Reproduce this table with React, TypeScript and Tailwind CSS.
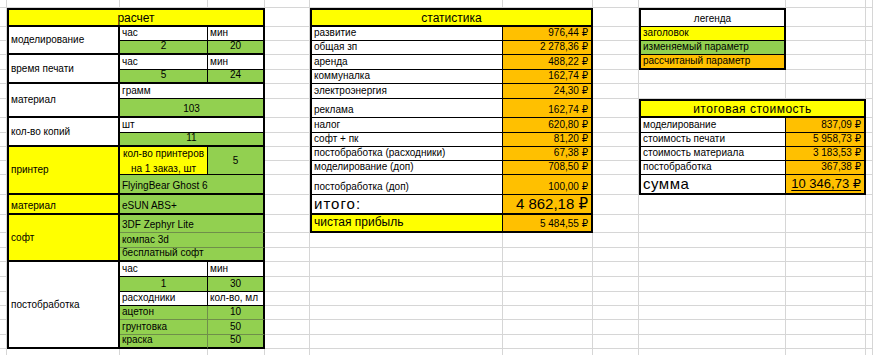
import React from "react";

const Y = "bg-[#ffff00]";
const G = "bg-[#92d050]";
const O = "bg-[#ffc000]";

function C({ p, cls = "", children }: { p: string; cls?: string; children?: React.ReactNode }) {
  return (
    <div className={`flex overflow-hidden whitespace-nowrap border-black text-[10px] leading-[12px] text-black ${p} ${cls}`}>
      {children}
    </div>
  );
}

const cellL = "items-end pl-[2px] pb-[1px]";
const cellC = "items-end justify-center pb-[1px]";
const cellR = "items-end justify-end pr-[3px] pb-[1px]";
const midL = "items-center pl-[2px]";

export default function App() {
  const bg = Array.from({ length: 300 });
  return (
    <div className="h-[355px] w-[873px] overflow-hidden bg-white font-['Liberation_Sans','DejaVu_Sans',sans-serif]">
      <div className="grid grid-cols-[7px_113px_88px_57px_45px_193px_90px_46px_147px_80px_1fr] grid-rows-[8px_19px_14px_14px_15px_14px_15px_19px_15px_14px_14px_14px_20px_20px_18px_15px_14px_15px_15px_14px_14px_15px_14px_14px_14px] auto-rows-[14px]">
        {/* ===== расчет ===== */}
        <C p="col-start-2 col-span-3 row-start-2" cls={`${Y} border-2 ${cellC} text-[12px]`}>расчет</C>

        <C p="col-start-2 row-start-3 row-span-2" cls={`bg-white border-l-2 border-r-2 border-b-2 ${midL}`}>моделирование</C>
        <C p="col-start-3 row-start-3" cls={`bg-white border-r border-b ${cellL}`}>час</C>
        <C p="col-start-4 row-start-3" cls={`bg-white border-r-2 border-b ${cellL}`}>мин</C>
        <C p="col-start-3 row-start-4" cls={`${G} border-r border-b-2 ${cellC}`}>2</C>
        <C p="col-start-4 row-start-4" cls={`${G} border-r-2 border-b-2 ${cellC}`}>20</C>

        <C p="col-start-2 row-start-5 row-span-2" cls={`bg-white border-l-2 border-r-2 border-b-2 ${midL}`}>время печати</C>
        <C p="col-start-3 row-start-5" cls={`bg-white border-r border-b ${cellL}`}>час</C>
        <C p="col-start-4 row-start-5" cls={`bg-white border-r-2 border-b ${cellL}`}>мин</C>
        <C p="col-start-3 row-start-6" cls={`${G} border-r border-b-2 ${cellC}`}>5</C>
        <C p="col-start-4 row-start-6" cls={`${G} border-r-2 border-b-2 ${cellC}`}>24</C>

        <C p="col-start-2 row-start-7 row-span-2" cls={`bg-white border-l-2 border-r-2 border-b-2 ${midL}`}>материал</C>
        <C p="col-start-3 col-span-2 row-start-7" cls={`bg-white border-r-2 border-b ${cellL}`}>грамм</C>
        <C p="col-start-3 col-span-2 row-start-8" cls={`${G} border-r-2 border-b-2 ${cellC}`}>103</C>

        <C p="col-start-2 row-start-9 row-span-2" cls={`bg-white border-l-2 border-r-2 border-b-2 ${midL}`}>кол-во копий</C>
        <C p="col-start-3 col-span-2 row-start-9" cls={`bg-white border-r-2 border-b ${cellL}`}>шт</C>
        <C p="col-start-3 col-span-2 row-start-10" cls={`${G} border-r-2 border-b-2 ${cellC}`}>11</C>

        <C p="col-start-2 row-start-11 row-span-3" cls={`${Y} border-l-2 border-r-2 border-b-2 ${midL}`}>принтер</C>
        <C p="col-start-3 row-start-11 row-span-2" cls={`${Y} border-r border-b flex-col items-center justify-center leading-[15px]`}>
          <span>кол-во принтеров</span>
          <span>на 1 заказ, шт</span>
        </C>
        <C p="col-start-4 row-start-11 row-span-2" cls={`${G} border-r-2 border-b items-center justify-center`}>5</C>
        <C p="col-start-3 col-span-2 row-start-13" cls={`${G} border-r-2 border-b-2 ${cellL}`}>FlyingBear Ghost 6</C>

        <C p="col-start-2 row-start-14" cls={`${Y} border-l-2 border-r-2 border-b-2 ${cellL}`}>материал</C>
        <C p="col-start-3 col-span-2 row-start-14" cls={`${G} border-r-2 border-b-2 ${cellL}`}>eSUN ABS+</C>

        <C p="col-start-2 row-start-15 row-span-3" cls={`${Y} border-l-2 border-r-2 border-b-2 ${midL}`}>софт</C>
        <C p="col-start-3 col-span-2 row-start-15" cls={`${G} border-r-2 border-b border-b-[#6f8f4a] ${cellL}`}>3DF Zephyr Lite</C>
        <C p="col-start-3 col-span-2 row-start-16" cls={`${G} border-r-2 border-b border-b-[#6f8f4a] ${cellL}`}>компас 3d</C>
        <C p="col-start-3 col-span-2 row-start-17" cls={`${G} border-r-2 border-b-2 ${cellL}`}>бесплатный софт</C>

        <C p="col-start-2 row-start-18 row-span-6" cls={`bg-white border-l-2 border-r-2 border-b-2 ${midL}`}>постобработка</C>
        <C p="col-start-3 row-start-18" cls={`bg-white border-r border-b ${cellL}`}>час</C>
        <C p="col-start-4 row-start-18" cls={`bg-white border-r-2 border-b ${cellL}`}>мин</C>
        <C p="col-start-3 row-start-19" cls={`${G} border-r border-b ${cellC}`}>1</C>
        <C p="col-start-4 row-start-19" cls={`${G} border-r-2 border-b ${cellC}`}>30</C>
        <C p="col-start-3 row-start-20" cls={`bg-white border-r border-b ${cellL}`}>расходники</C>
        <C p="col-start-4 row-start-20" cls={`bg-white border-r-2 border-b ${cellL}`}>кол-во, мл</C>
        <C p="col-start-3 row-start-21" cls={`${G} border-r border-r-[#6f8f4a] border-b border-b-[#6f8f4a] ${cellL}`}>ацетон</C>
        <C p="col-start-4 row-start-21" cls={`${G} border-r-2 border-b border-b-[#6f8f4a] ${cellC}`}>10</C>
        <C p="col-start-3 row-start-22" cls={`${G} border-r border-r-[#6f8f4a] border-b border-b-[#6f8f4a] ${cellL}`}>грунтовка</C>
        <C p="col-start-4 row-start-22" cls={`${G} border-r-2 border-b border-b-[#6f8f4a] ${cellC}`}>50</C>
        <C p="col-start-3 row-start-23" cls={`${G} border-r border-r-[#6f8f4a] border-b-2 ${cellL}`}>краска</C>
        <C p="col-start-4 row-start-23" cls={`${G} border-r-2 border-b-2 ${cellC}`}>50</C>

        {/* ===== статистика ===== */}
        <C p="col-start-6 col-span-2 row-start-2" cls={`${Y} border-2 ${cellC} text-[12px]`}>статистика</C>
        <C p="col-start-6 row-start-3" cls={`bg-white border-l-2 border-r border-b ${cellL}`}>развитие</C>
        <C p="col-start-7 row-start-3" cls={`${O} border-r-2 border-b ${cellR}`}>976,44 ₽</C>
        <C p="col-start-6 row-start-4" cls={`bg-white border-l-2 border-r border-b ${cellL}`}>общая зп</C>
        <C p="col-start-7 row-start-4" cls={`${O} border-r-2 border-b ${cellR}`}>2 278,36 ₽</C>
        <C p="col-start-6 row-start-5" cls={`bg-white border-l-2 border-r border-b ${cellL}`}>аренда</C>
        <C p="col-start-7 row-start-5" cls={`${O} border-r-2 border-b ${cellR}`}>488,22 ₽</C>
        <C p="col-start-6 row-start-6" cls={`bg-white border-l-2 border-r border-b ${cellL}`}>коммуналка</C>
        <C p="col-start-7 row-start-6" cls={`${O} border-r-2 border-b ${cellR}`}>162,74 ₽</C>
        <C p="col-start-6 row-start-7" cls={`bg-white border-l-2 border-r border-b ${cellL}`}>электроэнергия</C>
        <C p="col-start-7 row-start-7" cls={`${O} border-r-2 border-b ${cellR}`}>24,30 ₽</C>
        <C p="col-start-6 row-start-8" cls={`bg-white border-l-2 border-r border-b ${cellL}`}>реклама</C>
        <C p="col-start-7 row-start-8" cls={`${O} border-r-2 border-b ${cellR}`}>162,74 ₽</C>
        <C p="col-start-6 row-start-9" cls={`bg-white border-l-2 border-r border-b ${cellL}`}>налог</C>
        <C p="col-start-7 row-start-9" cls={`${O} border-r-2 border-b ${cellR}`}>620,80 ₽</C>
        <C p="col-start-6 row-start-10" cls={`bg-white border-l-2 border-r border-b ${cellL}`}>софт + пк</C>
        <C p="col-start-7 row-start-10" cls={`${O} border-r-2 border-b ${cellR}`}>81,20 ₽</C>
        <C p="col-start-6 row-start-11" cls={`bg-white border-l-2 border-r border-b ${cellL}`}>постобработка (расходники)</C>
        <C p="col-start-7 row-start-11" cls={`${O} border-r-2 border-b ${cellR}`}>67,38 ₽</C>
        <C p="col-start-6 row-start-12" cls={`bg-white border-l-2 border-r border-b ${cellL}`}>моделирование (доп)</C>
        <C p="col-start-7 row-start-12" cls={`${O} border-r-2 border-b ${cellR}`}>708,50 ₽</C>
        <C p="col-start-6 row-start-13" cls={`bg-white border-l-2 border-r border-b ${cellL}`}>постобработка (доп)</C>
        <C p="col-start-7 row-start-13" cls={`${O} border-r-2 border-b ${cellR}`}>100,00 ₽</C>
        <C p="col-start-6 row-start-14" cls={`bg-white border-l-2 border-r border-b-2 ${cellL} text-[15px] leading-[16px] tracking-[1px]`}>итого:</C>
        <C p="col-start-7 row-start-14" cls={`${O} border-r-2 border-b-2 ${cellR} text-[15px] leading-[16px]`}>4 862,18 ₽</C>
        <C p="col-start-6 row-start-15" cls={`${Y} border-l-2 border-r border-b-2 ${cellL} text-[12px] leading-[15px]`}>чистая прибыль</C>
        <C p="col-start-7 row-start-15" cls={`${O} border-r-2 border-b-2 ${cellR}`}>5 484,55 ₽</C>

        {/* ===== легенда ===== */}
        <C p="col-start-9 row-start-2" cls={`bg-white border-t-2 border-l-2 border-r-2 border-b ${cellC}`}>легенда</C>
        <C p="col-start-9 row-start-3" cls={`${Y} border-l-2 border-r-2 border-b ${cellL}`}>заголовок</C>
        <C p="col-start-9 row-start-4" cls={`${G} border-l-2 border-r-2 border-b ${cellL}`}>изменяемый параметр</C>
        <C p="col-start-9 row-start-5" cls={`${O} border-l-2 border-r-2 border-b-2 ${cellL}`}>рассчитаный параметр</C>

        {/* ===== итоговая стоимость ===== */}
        <C p="col-start-9 col-span-2 row-start-8" cls={`${Y} border-2 ${cellC} text-[12px] tracking-[0.5px]`}>итоговая стоимость</C>
        <C p="col-start-9 row-start-9" cls={`bg-white border-l-2 border-r border-b ${cellL}`}>моделирование</C>
        <C p="col-start-10 row-start-9" cls={`${O} border-r-2 border-b ${cellR}`}>837,09 ₽</C>
        <C p="col-start-9 row-start-10" cls={`bg-white border-l-2 border-r border-b ${cellL}`}>стоимость печати</C>
        <C p="col-start-10 row-start-10" cls={`${O} border-r-2 border-b ${cellR}`}>5 958,73 ₽</C>
        <C p="col-start-9 row-start-11" cls={`bg-white border-l-2 border-r border-b ${cellL}`}>стоимость материала</C>
        <C p="col-start-10 row-start-11" cls={`${O} border-r-2 border-b ${cellR}`}>3 183,53 ₽</C>
        <C p="col-start-9 row-start-12" cls={`bg-white border-l-2 border-r border-b ${cellL}`}>постобработка</C>
        <C p="col-start-10 row-start-12" cls={`${O} border-r-2 border-b ${cellR}`}>367,38 ₽</C>
        <C p="col-start-9 row-start-13" cls={`bg-white border-l-2 border-r border-b-2 ${cellL} text-[15px] leading-[16px] tracking-[0.5px]`}>сумма</C>
        <C p="col-start-10 row-start-13" cls={`${O} border-r-2 border-b-2 ${cellR} text-[13px] leading-[16px]`}>
          <span className="underline underline-offset-2">10 346,73 ₽</span>
        </C>

        {/* background gridlines (auto-placed into free cells) */}
        {bg.map((_, i) => (
          <div key={i} className="border-r border-b border-[#d6d6d6] bg-white" />
        ))}
      </div>
    </div>
  );
}
